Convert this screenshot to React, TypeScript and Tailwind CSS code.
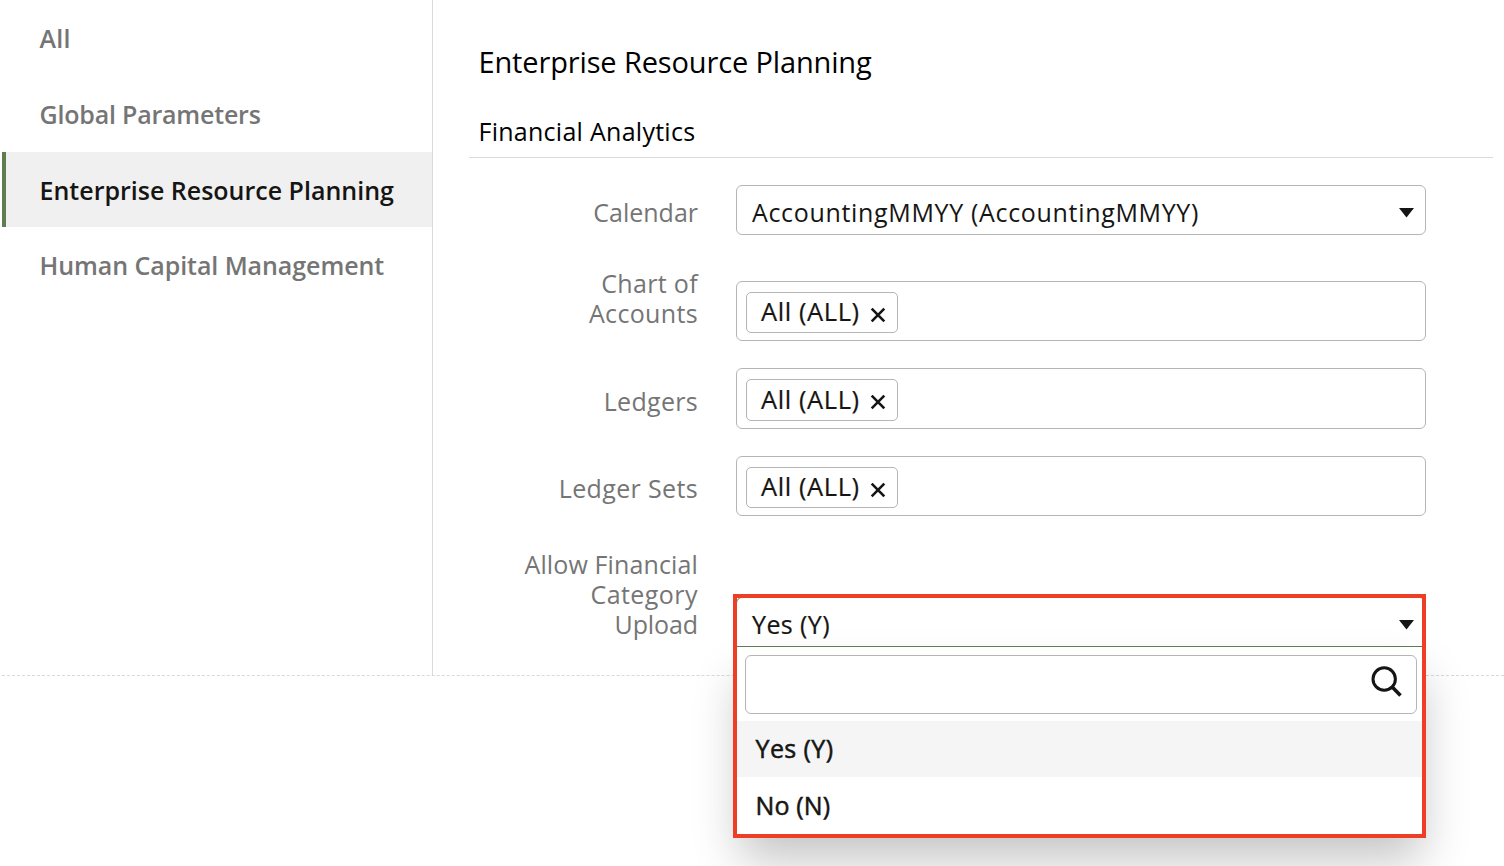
import { ReactNode } from "react";

const navItems = [
  { label: "All", style: "tracking-[0.2px]" },
  { label: "Global Parameters", style: "tracking-[-0.2px]" },
  { label: "Enterprise Resource Planning", style: "tracking-[0px]" },
  { label: "Human Capital Management", style: "tracking-[-0.07px]" },
];

function Caret() {
  return (
    <svg width="15" height="10" viewBox="0 0 15 10" className="mt-[2px] shrink-0">
      <path d="M0 0H15L7.5 9.5Z" fill="#161513" />
    </svg>
  );
}

function Row({ label, className, labelClass, children }: { label: ReactNode; className: string; labelClass: string; children: ReactNode }) {
  return (
    <div className={`flex gap-[38px] ${className}`}>
      <div className={`w-[229px] shrink-0 text-right leading-[30px] whitespace-nowrap text-[#757575] ${labelClass}`}>{label}</div>
      {children}
    </div>
  );
}

function MultiSelect({ className, chipClass }: { className: string; chipClass: string }) {
  return (
    <div className={`w-[690px] shrink-0 rounded-[6px] border border-[#b5b5b5] pt-[10px] pl-[9px] ${className}`}>
      <div className={`flex w-[152px] items-center rounded-[5px] border border-[#b5b5b5] pl-[14px] ${chipClass}`}>
        <span className="mb-[3px] w-[108.5px] shrink-0 text-[25.5px] leading-[30px] tracking-[0.58px] whitespace-nowrap [-webkit-text-stroke:0.2px_#161513]">All (ALL)</span>
        <svg width="16" height="16" viewBox="0 0 16 16" className="mt-[4px] shrink-0">
          <path d="M1.7 1.7L14.3 14.3M14.3 1.7L1.7 14.3" stroke="#161513" strokeWidth="2.6" />
        </svg>
      </div>
    </div>
  );
}

export default function App() {
  return (
    <div className="h-[866px] w-[1504px] overflow-hidden bg-white pl-[2px] font-['Open_Sans',sans-serif] text-[25px] text-[#161513]">
      <div className="flex h-[676px] border-b border-dashed border-[#d9d9d9]">
        <nav className="flex w-[431px] shrink-0 flex-col border-r border-[#dadada] pt-[1px]">
          {navItems.map((item, i) => (
            <div
              key={item.label}
              className={`flex shrink-0 items-center font-semibold whitespace-nowrap ${item.style} ${i === 2 ? "h-[75px] border-l-4 border-[#5f7d4f] bg-[#f0f0f0] pt-[2px] pl-[33.5px]" : "h-[75.5px] pl-[37.5px] text-[#757575]"} ${i === 3 ? "pt-[2px]" : ""}`}
            >
              {item.label}
            </div>
          ))}
        </nav>
        <main className="flex w-[1071px] shrink-0 flex-col pl-[36px]">
          <h1 className="mt-[42px] pl-[9.5px] text-[29px] leading-[40px] tracking-[-0.14px] text-black">Enterprise Resource Planning</h1>
          <h2 className="mt-[29px] mr-[11px] h-[47px] border-b border-[#d9d9d9] pl-[9.5px] leading-[40px] tracking-[0.27px] text-black">Financial Analytics</h2>
          <Row label="Calendar" className="mt-[27px] h-[50px]" labelClass="pt-[12px]">
            <div className="flex h-[50px] w-[690px] items-center justify-between rounded-[6px] border border-[#b5b5b5] pt-[4px] pr-[11px] pl-[15px]">
              <span className="leading-[30px] tracking-[0.67px]">AccountingMMYY (AccountingMMYY)</span>
              <Caret />
            </div>
          </Row>
          <Row label={<>Chart of<br />Accounts</>} className="mt-[34px] h-[72px]" labelClass="-mt-px tracking-[0.35px]">
            <MultiSelect className="mt-[12px] h-[60px]" chipClass="h-[41px]" />
          </Row>
          <Row label="Ledgers" className="mt-[27px] h-[61px]" labelClass="pt-[18px] tracking-[0.3px]">
            <MultiSelect className="h-[61px]" chipClass="h-[42px]" />
          </Row>
          <Row label="Ledger Sets" className="mt-[27px] h-[60px]" labelClass="pt-[17px] tracking-[0.36px]">
            <MultiSelect className="h-[60px]" chipClass="h-[41px]" />
          </Row>
          <Row
            label={<>Allow Financial<br /><span className="tracking-[0.45px]">Category</span><br /><span className="tracking-[-0.1px]">Upload</span></>}
            className="mt-[34px] h-[90px]"
            labelClass="-mt-px tracking-[0.13px]"
          >
            <div className="relative mt-[47px] h-[50px] w-[690px] shrink-0">
              <div className="flex h-[50px] items-center justify-between rounded-t-[6px] border border-[#5f7d4f] pt-[4px] pr-[11px] pl-[15px]">
                <span className="leading-[30px] tracking-[0.4px] [-webkit-text-stroke:0.2px_#161513]">Yes (Y)</span>
                <Caret />
              </div>
              <div className="absolute top-[49px] left-0 z-10 h-[190px] w-[690px] border-t border-[#5f7d4f] bg-white shadow-[0_28px_44px_-4px_rgba(0,0,0,0.23)]">
                <div className="mt-[8px] ml-[9px] flex h-[59px] w-[672px] items-start justify-end rounded-[6px] border border-[#b5b5b5] pt-[9px] pr-[13px]">
                  <svg width="32" height="32" viewBox="0 0 32 32" fill="none" stroke="#161513">
                    <circle cx="13.2" cy="14" r="11.2" strokeWidth="3" />
                    <path d="M21.2 22L29.5 30.4" strokeWidth="3.6" />
                  </svg>
                </div>
                <div className="mt-[7px] flex h-[56px] items-center bg-[#f5f5f5] pl-[19.5px] tracking-[0.4px] [-webkit-text-stroke:0.5px_#161513]">Yes (Y)</div>
                <div className="flex h-[57px] items-center pl-[19.5px] tracking-[0.15px] [-webkit-text-stroke:0.5px_#161513]">No (N)</div>
              </div>
              <div className="absolute top-[-3px] left-[-3px] z-20 h-[244px] w-[693px] border-4 border-[#ee3e26]" />
            </div>
          </Row>
        </main>
      </div>
    </div>
  );
}
